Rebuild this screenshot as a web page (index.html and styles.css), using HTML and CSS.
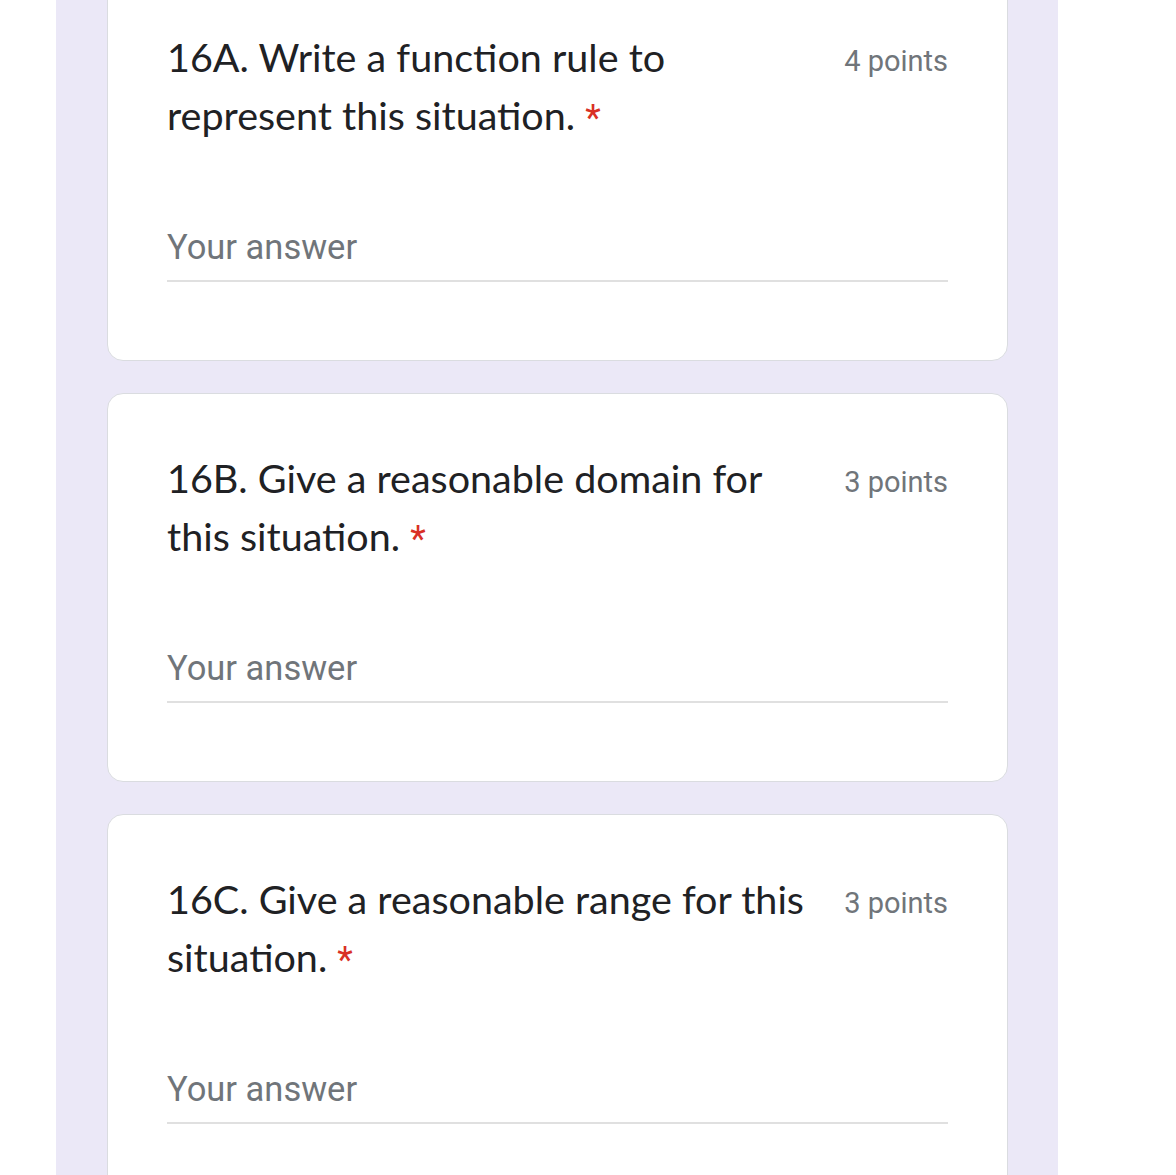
FILE: index.html
```html
<!DOCTYPE html>
<html>
<head>
<meta charset="utf-8">
<link rel="stylesheet" href="styles.css">
</head>
<body>
<div class="band">
  <div class="card first">
    <div class="head">
      <div class="title">16A. Write a function rule to<br>represent this situation.<span class="req">*</span></div>
      <div class="points">4 points</div>
    </div>
    <div class="answer">Your answer</div>
  </div>
  <div class="card">
    <div class="head">
      <div class="title">16B. Give a reasonable domain for<br>this situation.<span class="req">*</span></div>
      <div class="points">3 points</div>
    </div>
    <div class="answer">Your answer</div>
  </div>
  <div class="card">
    <div class="head">
      <div class="title">16C. Give a reasonable range for this<br>situation.<span class="req">*</span></div>
      <div class="points">3 points</div>
    </div>
    <div class="answer">Your answer</div>
  </div>
</div>
</body>
</html>
```

FILE: styles.css
```css
html, body {
  margin: 0;
  padding: 0;
  background: #ffffff;
}
body {
  height: 1175px;
  overflow: hidden;
}
.band {
  margin-left: 56px;
  width: 1002px;
  box-sizing: border-box;
  padding: 0 50px 0 51px;
  background: #ebe8f7;
  height: 1175px;
  display: flex;
  flex-direction: column;
  gap: 32px;
}
.card {
  flex: none;
  height: 389px;
  box-sizing: border-box;
  background: #ffffff;
  border: 1px solid #dadce0;
  border-radius: 16px;
  padding: 55px 59px 0 59px;
}
.card.first {
  margin-top: -28px;
}
.head {
  display: flex;
  justify-content: space-between;
  align-items: flex-start;
  gap: 20px;
}
.title {
  font-family: "Lato", "Open Sans", sans-serif;
  font-size: 39.5px;
  line-height: 58px;
  color: #202124;
  white-space: nowrap;
}
.req {
  color: #d93025;
  font-family: "Roboto", "Liberation Sans", sans-serif;
  font-size: 36px;
  margin-left: 10px;
}
.points {
  font-family: "Roboto", "Liberation Sans", sans-serif;
  font-size: 29px;
  line-height: 58px;
  color: #70757a;
  white-space: nowrap;
  padding-top: 4px;
}
.answer {
  margin-top: 79px;
  font-family: "Roboto", "Liberation Sans", sans-serif;
  font-size: 34.5px;
  line-height: 42px;
  color: #70757a;
  padding-bottom: 12px;
  border-bottom: 2px solid #e0e0e0;
}
```
